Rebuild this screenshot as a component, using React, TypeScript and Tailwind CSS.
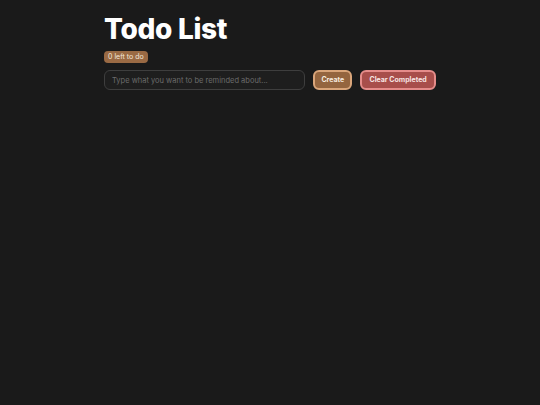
const App = () => {
  return (
    <div className="min-h-screen bg-[#1a1a1a] font-['Inter',sans-serif]">
      <div className="mx-auto w-[332px] pt-[12px]">
        <h1 className="text-[28px] leading-[34px] font-extrabold text-white tracking-[-0.3px]">Todo List</h1>
        <div className="mt-[5px] w-fit rounded-[4px] bg-[#9a6a44] px-[4px] py-[2px] text-[7px] leading-[8px] text-[#f3e6da]">
          0 left to do
        </div>
        <div className="mt-[7px] flex items-center">
          <input
            className="h-[20px] w-[202px] rounded-[6px] border border-[#3e3e3e] bg-[#1e1e1e] px-[7px] text-[7.5px] text-white placeholder:text-[#6b6b6b] outline-none"
            placeholder="Type what you want to be reminded about..."
          />
          <button className="ml-[8px] h-[20px] w-[39px] rounded-[6px] border-2 border-[#d9a57a] bg-[#94653f] text-[7px] font-bold text-[#f5eadf]">
            Create
          </button>
          <button className="ml-[8px] h-[20px] w-[76px] rounded-[6px] border-2 border-[#e58c8a] bg-[#a84e4b] text-[7px] font-bold text-[#f7e4e2]">
            Clear Completed
          </button>
        </div>
      </div>
    </div>
  )
}

export default App;
